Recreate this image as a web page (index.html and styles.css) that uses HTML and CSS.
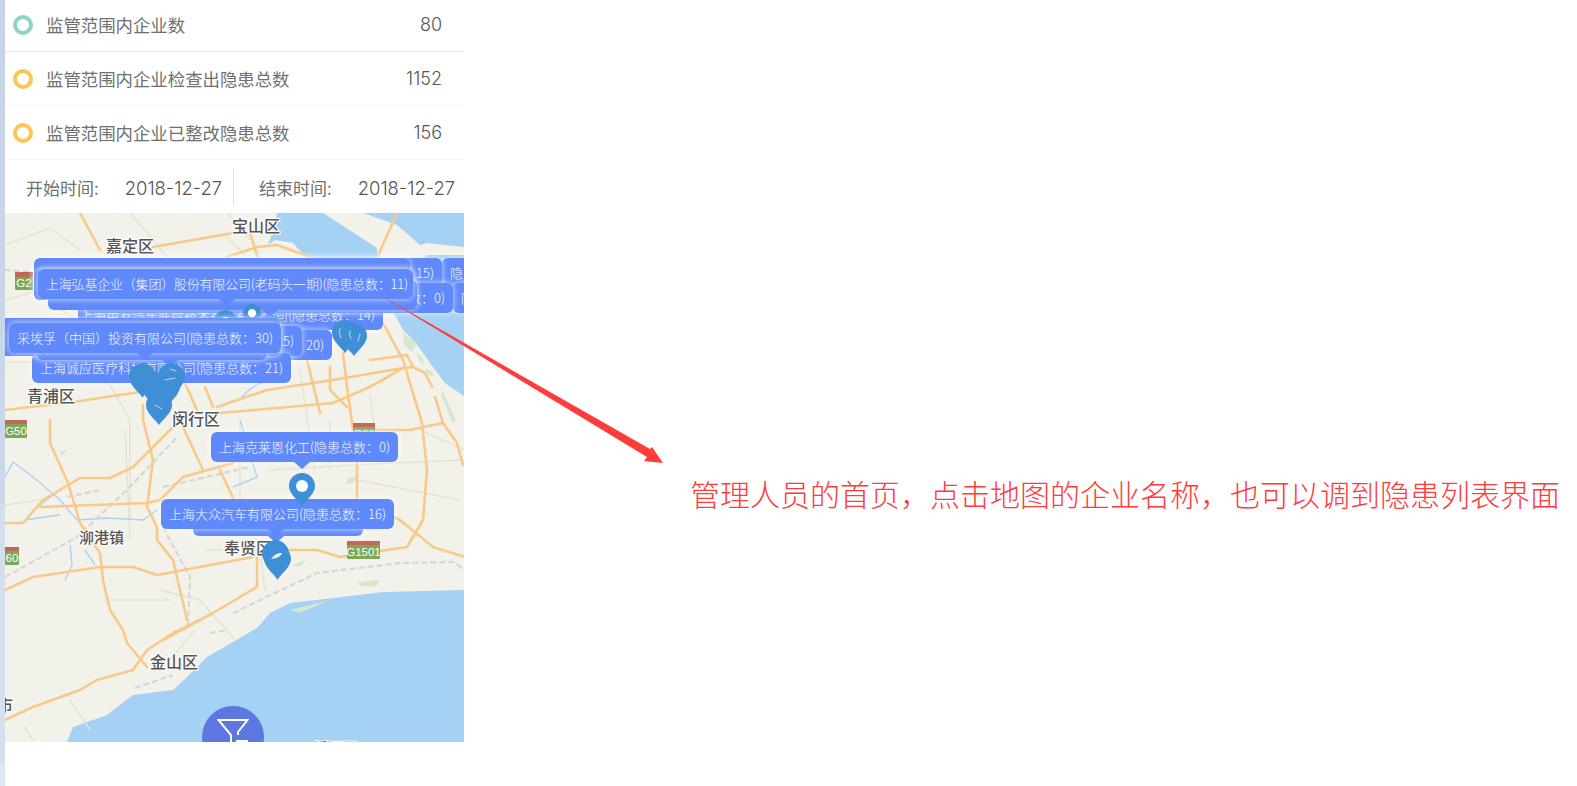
FILE: index.html
```html
<!DOCTYPE html>
<html lang="zh-CN">
<head>
<meta charset="utf-8">
<title>管理人员首页</title>
<link rel="stylesheet" href="styles.css">
</head>
<body>
<div class="page">
  <div class="strip"></div>
  <main class="phone">
    <div class="stat stat-first"><span class="dot dot-green"></span><span class="stat-name">监管范围内企业数</span><span class="stat-num">80</span></div>
    <div class="stat stat-second"><span class="dot dot-yellow"></span><span class="stat-name">监管范围内企业检查出隐患总数</span><span class="stat-num">1152</span></div>
    <div class="stat stat-third"><span class="dot dot-yellow"></span><span class="stat-name">监管范围内企业已整改隐患总数</span><span class="stat-num">156</span></div>
    <div class="dates">
      <div class="date date-start"><span>开始时间:</span><span class="date-val">2018-12-27</span></div>
      <div class="divider"></div>
      <div class="date date-end"><span>结束时间:</span><span class="date-val">2018-12-27</span></div>
    </div>
    <div class="map">
      <svg class="layer" viewBox="5 213 460 529">
        <defs>
          <symbol id="pin" viewBox="0 0 26 33"><path fill="#3f8fd6" d="M13 0C5.800 0 0 5.800 0 13C0 21 9 27 13 33C17 27 26 21 26 13C26 5.800 20.200 0 13 0Z"/><circle cx="13" cy="13" r="6" fill="#fbfcfd"/></symbol>
          <symbol id="pin-solid" viewBox="0 0 26 33"><path fill="#3f8fd6" d="M13 0C5.800 0 0 5.800 0 13C0 21 9 27 13 33C17 27 26 21 26 13C26 5.800 20.200 0 13 0Z"/></symbol>
        </defs>
        <rect x="5" y="213" width="460" height="529" fill="#f3f2ea"/>
        <g fill="#a5d2f4">
          <path d="M277 213H323L377 248V262H310L293 243L275 240L268 245L275 225Z"/>
          <path d="M363 213L397 225L420 245L427 243L465 247V213Z"/>
          <path d="M427 255L465 255V397L445 383L433 367L415 342L403 330L395 315L380 300Z"/>
          <path d="M67 742L73 727L107 715L133 695L173 690L187 677L207 657L257 628L270 613L290 603L333 598L383 592L465 590V742Z"/>
        </g>
        <g fill="#d5e8cf">
          <path d="M403 333L417 343L412 352L404 345Z"/><path d="M416 352L421 356L425 365L420 362Z"/><path d="M442 390L456 420L453 424L441 395Z"/><path d="M425 368L432 371L434 376L427 375Z"/>
          <path d="M347 479L356 476L354 483L347 484Z"/><path d="M292 565L306 560L300 567Z"/><path d="M290 610L330 600L300 613Z"/><path d="M357 582L380 580L376 587L360 586Z"/><path d="M60 452L68 449L62 456Z"/>
        </g>
        <g fill="none" stroke="#e5e3d5" stroke-width="1.500">
          <path d="M5 245L50 228L80 250M5 300L40 290L85 330L130 350M130 213L170 260M5 362H60L110 385L130 420V520M5 505L40 500M240 420V500M270 470L350 465L465 460"/>
          <path d="M300 370L315 470M330 420V470M370 395L375 430M205 550H260L265 590M160 590L200 600L235 640M100 600H170M23 725L33 740M70 700L90 730M195 630L170 660"/>
          <path d="M357 480L460 500M420 430L465 450M228 213L250 240M225 235L245 255M300 500V520M290 530L380 530M125 430L130 540"/>
        </g>
        <g fill="none" stroke="#a9d3f5" stroke-width="1.400">
          <path d="M5 477L13 462L33 477L60 500L77 520L107 518L143 520L157 510M240 420L257 477L233 487M40 505L60 490M25 520L60 515M70 545L72 565L65 580M85 550L95 565"/>
          <path d="M240 400Q250 385 270 380M5 325L40 330L60 320"/>
        </g>
        <g fill="none" stroke="#d6d6d2" stroke-width="2.200" stroke-dasharray="6 3">
          <path d="M5 577L77 537L127 490L177 437M67 497L100 490M163 487L250 467M163 527L190 577L188 627M233 613L317 573L400 563L453 562L465 570M135 688L173 675M210 633L228 630M5 270L30 272"/>
        </g>
        <g fill="none" stroke="#f9c98a" stroke-width="2.600" stroke-linejoin="round" stroke-linecap="round">
          <path d="M80 213L100 250M153 247L233 233M250 233L263 273M227 257L257 247L277 245L310 257M397 213L377 258"/>
          <path d="M5 410L73 402L140 392M217 407L267 390L333 380L403 368L413 367L425 373L432 387M435 397L443 423L457 443L463 465M383 323L403 360L422 423M343 353L347 387L353 430M307 360L320 413M330 367V390L347 407M185 383L197 410M205 387L213 407M220 413L333 403L370 387L403 368M370 360L407 355L413 367"/>
          <path d="M50 420V443L68 483L80 523L100 553L103 580L110 610L123 630L127 643L147 667M5 523H23L43 500L80 478H110L133 467L177 423M5 590L33 577L100 567H133L157 575L253 557"/>
          <path d="M40 507L147 503L160 500M143 405V420L153 460L147 507L157 527V540L173 560L187 620M183 427L203 470M160 500L183 477L233 463M220 470L240 513M257 553V587L213 613L163 640"/>
          <path d="M287 550H317L340 557L407 547L423 520L427 470L422 423M357 463V500L400 520L433 547L465 557M353 430L372 430L410 430L443 423"/>
          <path d="M5 720L33 707L80 690L97 680L133 670L147 650L173 633L200 620"/>
        </g>
        <g class="shield">
          <rect x="15" y="272" width="18" height="18" rx="1" fill="#7da956"/><rect x="15" y="272" width="18" height="5" fill="#c5665a"/><text x="24" y="287">G2</text>
          <rect x="5" y="420" width="22" height="18" rx="1" fill="#7da956"/><rect x="5" y="420" width="22" height="4" fill="#c5665a"/><text x="16" y="435">G50</text>
          <rect x="353" y="423" width="22" height="18" rx="1" fill="#7da956"/><rect x="353" y="423" width="22" height="4" fill="#c5665a"/><text x="364" y="438">G20</text>
          <rect x="347" y="541" width="33" height="18" rx="1" fill="#7da956"/><rect x="347" y="541" width="33" height="4" fill="#c5665a"/><text x="363.500" y="556">G1501</text>
          <rect x="5" y="547" width="14" height="18" rx="1" fill="#7da956"/><rect x="5" y="547" width="14" height="4" fill="#c5665a"/><text x="12" y="562">60</text>
        </g>
        <g class="place">
          <text x="232" y="232">宝山区</text>
          <text x="106" y="252">嘉定区</text>
          <text x="27" y="402">青浦区</text>
          <text x="172" y="425">闵行区</text>
          <text x="79" y="543" class="place-small">泖港镇</text>
          <text x="224" y="554">奉贤区</text>
          <text x="150" y="668">金山区</text>
          <text x="-3" y="711">市</text>
          <text x="313" y="754" class="place-small">嵊泗县</text>
        </g>
      </svg>

      <div class="tip tip-r1">隐患总数：9)</div>
      <div class="tip tip-r2">隐患总数：3)</div>
      <div class="tip tip-14">上海用友汽车底盘技术系统有限公司(隐患总数：14)</div>
      <div class="tip tip-15">上海华谊集团股份有限公司有限公司(隐患总数：15)</div>
      <div class="tip tip-0">上海华谊集团股份有限公司有限公司(隐患总数：0)</div>
      <div class="tip tip-s1"></div>
      <div class="tip tip-s2"></div>
      <div class="tip tip-s3"></div>
      <div class="tip tip-main">上海弘基企业（集团）股份有限公司(老码头一期)(隐患总数：11)</div>

      <svg class="layer" viewBox="5 213 460 529">
        <use href="#pin" x="213" y="310" width="25" height="32"/>
        <use href="#pin" x="243" y="304" width="18" height="23"/>
        <use href="#pin" x="260" y="315" width="22" height="28"/>
      </svg>

      <div class="tip tip-20">上海石化股份有限公司(隐患总数：20)</div>
      <div class="tip tip-5">上海石化股份公司(隐患总数：15)</div>
      <div class="tip tip-21">上海诚应医疗科技有限公司(隐患总数：21)</div>
      <div class="tip tip-s4"></div>
      <div class="tip tip-s5"></div>
      <div class="tip tip-30">采埃孚（中国）投资有限公司(隐患总数：30)</div>

      <div class="tip tip-back"></div>
      <div class="tip tip-0b">上海克莱恩化工(隐患总数：0)</div>
      <div class="tip tip-16">上海大众汽车有限公司(隐患总数：16)</div>

      <svg class="layer" viewBox="5 213 460 529">
        <use href="#pin-solid" x="332" y="320" width="26" height="33"/>
        <use href="#pin-solid" x="341" y="323" width="26" height="33"/>
        <use href="#pin-solid" x="129" y="363" width="27" height="35"/>
        <use href="#pin-solid" x="158" y="363" width="27" height="35"/>
        <use href="#pin-solid" x="152" y="372" width="28" height="36"/>
        <use href="#pin-solid" x="141" y="372" width="27" height="35"/>
        <use href="#pin-solid" x="146" y="392" width="26" height="33"/>
        <use href="#pin" x="289" y="473" width="26" height="33"/>
        <use href="#pin-solid" x="262" y="540" width="27" height="35"/>
        <use href="#pin-solid" x="264" y="545" width="27" height="35"/>
        <g fill="none" stroke="#dce9f6" stroke-width="1" stroke-linecap="round" stroke-opacity=".8">
          <path d="M340 329Q338 334 341 338M350 331Q348 335 351 339M360 334Q359 338 358 341M165 380L175 378M170 369L176 371M155 405L162 409"/>
        </g>
        <path d="M271 559Q276 552 282 553Q281 558 271 559Z" fill="#f0f4f8"/>
      </svg>

      <div class="fab">
        <svg class="fab-icon" viewBox="0 0 32 36"><path fill="none" stroke="#fff" stroke-width="2" d="M14 36V17L1.500 2H30.500L21 14V17"/><path fill="#fff" d="M19 22H31V24H19Z"/></svg>
      </div>
    </div>
  </main>
  <aside class="note">管理人员的首页，点击地图的企业名称，也可以调到隐患列表界面</aside>
</div>
<svg class="pointer" viewBox="0 0 1577 786"><path fill="#ff3b3b" d="M375 292L650 449L652 447L663 463L644 461L647 457Z"/></svg>
</body>
</html>
```
FILE: styles.css
```css
* { box-sizing: border-box; }
html, body { margin: 0; height: 786px; overflow: hidden; background: #fff; }
body { position: relative; font-family: "Noto Sans CJK SC", "Noto Sans", sans-serif; }
.page { display: flex; height: 786px; }
.strip { width: 5px; flex: none; background: linear-gradient(#c6d4e7 0, #cbd8e9 503px, #d2dfed 503px, #d4e0ee 764px, #deeaf3 764px); }
.phone { width: 459px; flex: none; display: flex; flex-direction: column; }
.stat { display: flex; align-items: center; padding: 0 22px 0 8px; color: #707070; background: #fff; }
.stat-first { height: 52px; padding-bottom: 2px; border-bottom: 1px solid #e3e3e3; }
.stat-second { height: 54px; border-bottom: 1px solid #f6f6f6; }
.stat-third { height: 54px; border-bottom: 1px solid #f6f6f6; }
.dot { width: 20px; height: 20px; border-radius: 50%; border: 4px solid; flex: none; }
.dot-green { border-color: #8ed4c2; }
.dot-yellow { border-color: #fbc654; }
.stat-name { margin-left: 13px; flex: 1; font-size: 17.400px; font-weight: 400; }
.stat-num { font-size: 18px; font-family: Inter, sans-serif; font-weight: 300; color: #555; }
.dates { height: 53px; padding-top: 1px; display: flex; align-items: center; color: #707070; font-size: 17px; font-weight: 400; background: #fff; }
.date { display: flex; gap: 26px; align-items: center; white-space: nowrap; }
.date-start { width: 228px; padding-left: 21px; }
.date-end { padding-left: 25px; }
.date-val { font-size: 18.400px; font-family: Inter, sans-serif; font-weight: 300; color: #555; position: relative; top: 1px; }
.divider { width: 1px; height: 38px; background: #e3e3e3; flex: none; }
.map { position: relative; height: 529px; overflow: hidden; }
.layer { position: absolute; left: 0; top: 0; width: 460px; height: 529px; pointer-events: none; }
.shield text { font: 11.500px "Liberation Sans", sans-serif; fill: #fff; text-anchor: middle; }
.place text { font-size: 16px; font-weight: 500; fill: #555; stroke: #fff; stroke-width: 2.500px; paint-order: stroke; stroke-opacity: .85; font-family: "Noto Sans CJK SC", sans-serif; }
.place .place-small { font-size: 15px; }

.tip { position: absolute; display: flex; justify-content: flex-end; height: 30px; line-height: 30px; padding: 0 8px; border-radius: 6px; background: #6089fb; color: #f4f7ff; font-size: 13px; font-weight: 300; white-space: nowrap; box-shadow: 0 0 6px rgba(255, 255, 255, .75); --ax: 50%; }
.tip::after { content: ""; position: absolute; top: 100%; left: var(--ax); margin-left: -8px; border: 8px solid transparent; border-bottom-width: 0; border-top: 7px solid #6089fb; }
.tip-r1 { left: 437px; top: 45px; width: 120px; justify-content: flex-start; }
.tip-r1::after, .tip-r2::after, .tip-15::after, .tip-0::after, .tip-s1::after, .tip-20::after, .tip-5::after { display: none; }
.tip-r2 { left: 448px; top: 70px; width: 120px; justify-content: flex-start; }
.tip-14 { left: 73px; top: 87px; width: 305px; --ax: 269px; }
.tip-15 { left: 63px; top: 45px; width: 374px; }
.tip-0 { left: 80px; top: 70px; width: 368px; }
.tip-s1 { left: 29px; top: 45px; width: 376px; }
.tip-s2 { left: 29px; top: 57px; width: 380px; --ax: 198px; }
.tip-s3 { left: 43px; top: 67px; width: 369px; --ax: 222px; }
.tip-main { left: 33px; top: 56px; width: 375px; letter-spacing: -.2px; justify-content: flex-start; --ax: 189px; }
.tip-20 { left: 100px; top: 117px; width: 227px; }
.tip-5 { left: 80px; top: 113px; width: 217px; }
.tip-21 { left: 27px; top: 140px; justify-content: flex-start; --ax: 113px; }
.tip-s4 { left: -10px; top: 105px; width: 285px; height: 38px; --ax: 160px; }
.tip-s5 { left: 32px; top: 117px; width: 230px; --ax: 133px; }
.tip-30 { left: 4px; top: 110px; justify-content: flex-start; --ax: 136px; }
.tip-back { left: 188px; top: 293px; width: 170px; --ax: 83px; }
.tip-0b { left: 206px; top: 219px; justify-content: flex-start; --ax: 91px; }
.tip-16 { left: 156px; top: 286px; justify-content: flex-start; --ax: 115px; }

.fab { position: absolute; left: 197px; top: 493px; width: 62px; height: 62px; border-radius: 50%; background: #5c78e0; display: flex; justify-content: center; padding-top: 12px; }
.fab-icon { width: 32px; height: 36px; }

.note { margin: 471px 0 0 226px; font-size: 30px; font-weight: 300; color: #ff3b3b; white-space: nowrap; height: 44px; line-height: 44px; }
.pointer { position: absolute; left: 0; top: 0; width: 1577px; height: 786px; pointer-events: none; }
```
